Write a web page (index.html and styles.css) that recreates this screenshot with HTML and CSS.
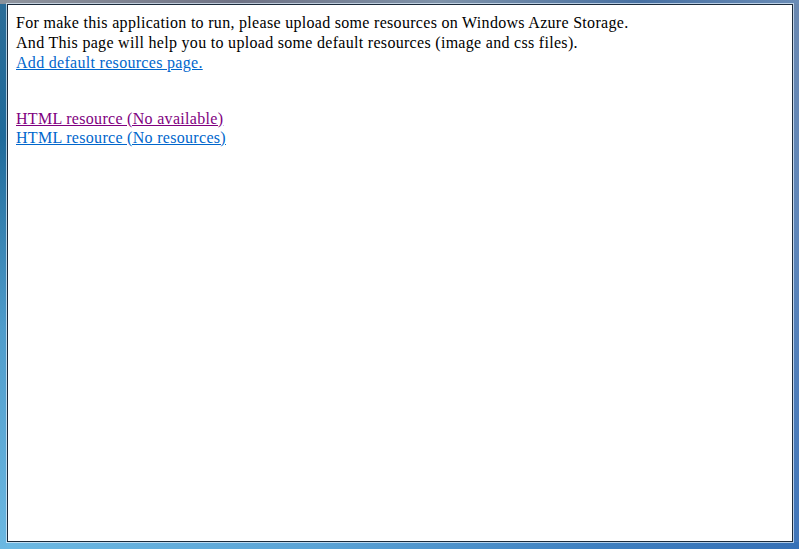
FILE: index.html
```html
<!DOCTYPE html>
<html>
<head>
<meta charset="utf-8">
<title>Resources</title>
<link rel="stylesheet" href="styles.css">
</head>
<body>
<div class="frame">
  <div class="window">
    <div class="content">
      <div class="intro">
        For make this application to run, please upload some resources on Windows Azure Storage.<br>
        And This page will help you to upload some default resources (image and css files).<br>
        <a href="#" class="link">Add default resources page.</a>
      </div>
      <div class="resources">
        <a href="#" class="link visited">HTML resource (No available)</a><br>
        <a href="#" class="link">HTML resource (No resources)</a>
      </div>
    </div>
  </div>
</div>
</body>
</html>
```
FILE: styles.css
```css
html, body {
  margin: 0;
  padding: 0;
  width: 799px;
  height: 549px;
  overflow: hidden;
}

.frame {
  box-sizing: border-box;
  width: 799px;
  height: 549px;
  padding: 4px 6px 7px 7px;
  background:
    linear-gradient(to right, rgba(150,150,155,0.9) 0%, rgba(120,110,120,0.8) 30%, rgba(140,150,165,0.8) 55%, rgba(70,110,160,0.9) 80%, #6a8cb6 100%) top / 100% 4px no-repeat,
    linear-gradient(to bottom, #2c6d98 0%, #1f6a9a 25%, #4f9ccb 60%, #6cb8e2 100%) left / 7px 100% no-repeat,
    linear-gradient(to right, #6cb9e3 0%, #5aa3d6 40%, #3e7fc0 75%, #3570b6 100%) bottom / 100% 7px no-repeat,
    linear-gradient(to bottom, #6a88b0 0%, #5f86b8 40%, #3f75b9 100%) right / 6px 100% no-repeat,
    #4d86bb;
}

.window {
  box-sizing: border-box;
  height: 100%;
  background: #ffffff;
  border: 1px solid #1b2b3c;
  box-shadow: 0 0 0 1px rgba(220, 235, 248, 0.75);
}

.content {
  padding: 8px;
  font-family: "Liberation Serif", "Times New Roman", serif;
  font-size: 16px;
  letter-spacing: 0.3px;
  color: #000000;
}

.intro {
  line-height: 20px;
}

.resources {
  margin-top: 35.5px;
  line-height: 19px;
}

.link {
  color: #0066cc;
  text-decoration: underline;
}

.link.visited {
  color: #800080;
}
```
